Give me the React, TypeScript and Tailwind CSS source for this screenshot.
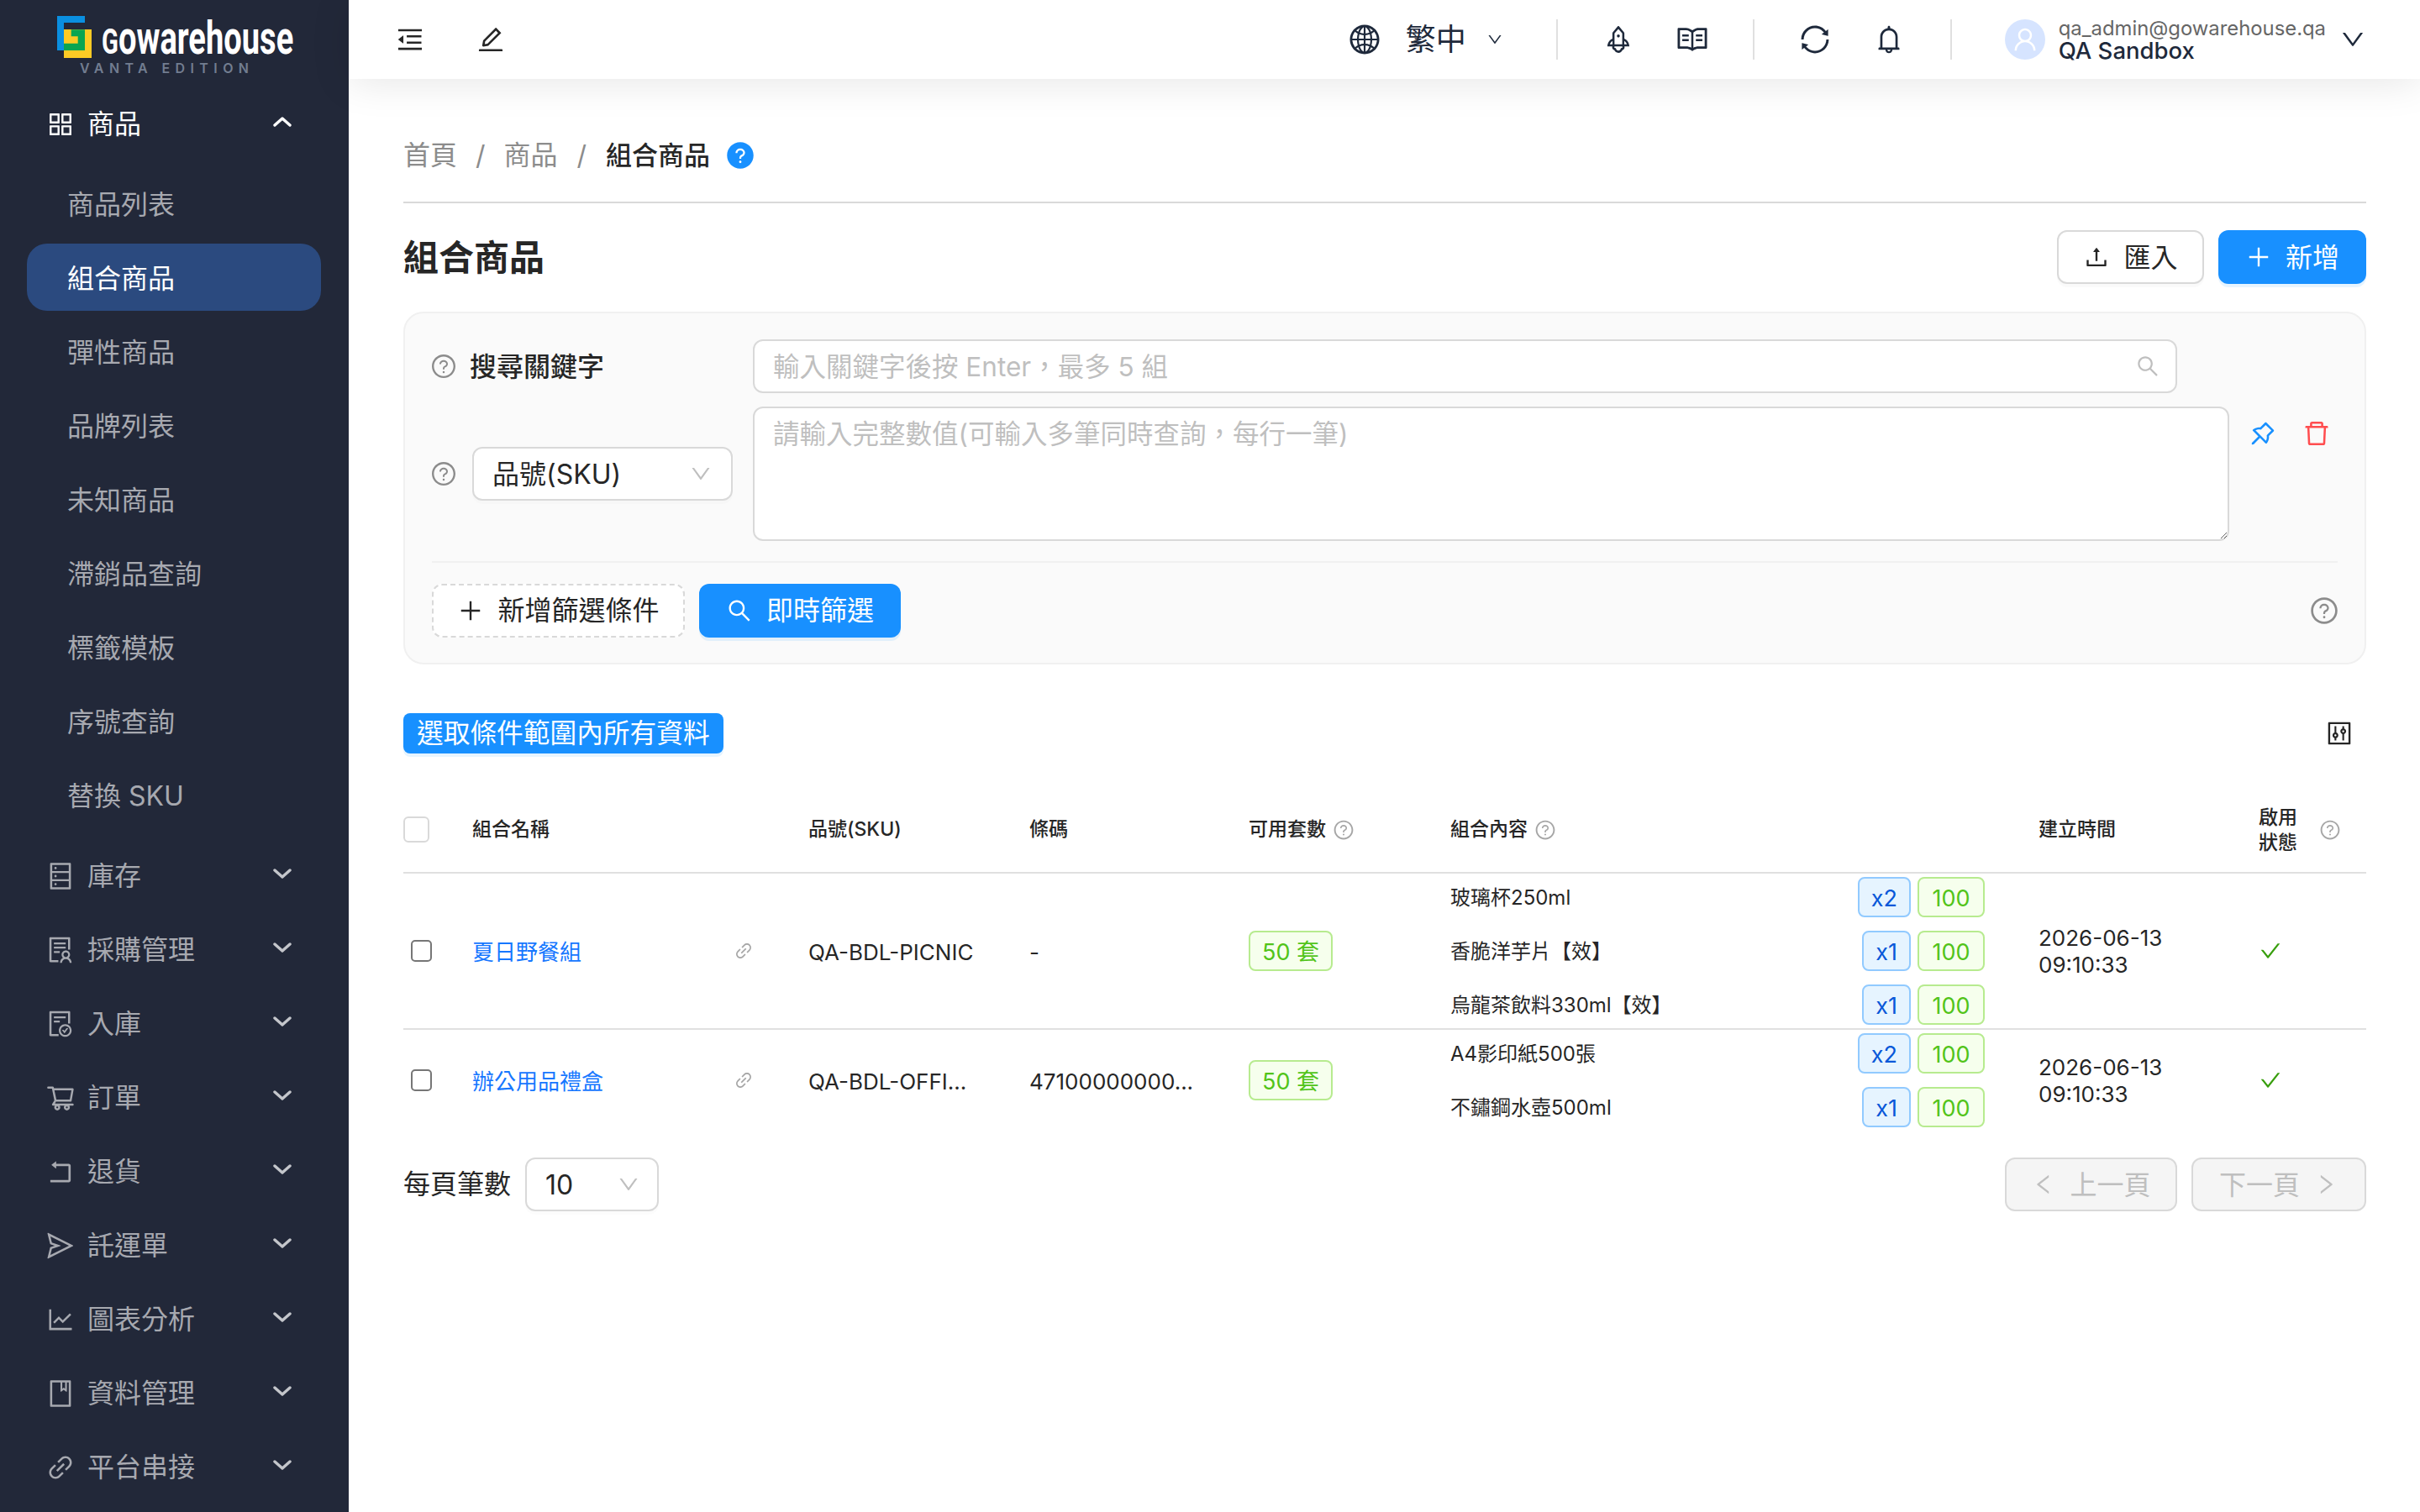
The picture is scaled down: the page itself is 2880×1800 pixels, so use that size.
import { ReactNode } from "react";
import {
  AiFillQuestionCircle,
  AiOutlineAppstore,
  AiOutlineBell,
  AiOutlineBook,
  AiOutlineCheck,
  AiOutlineControl,
  AiOutlineDatabase,
  AiOutlineDelete,
  AiOutlineDown,
  AiOutlineEdit,
  AiOutlineFileDone,
  AiOutlineGlobal,
  AiOutlineLeft,
  AiOutlineLineChart,
  AiOutlineLink,
  AiOutlineMenuFold,
  AiOutlinePlus,
  AiOutlinePushpin,
  AiOutlineQuestionCircle,
  AiOutlineRead,
  AiOutlineRight,
  AiOutlineRocket,
  AiOutlineRollback,
  AiOutlineSearch,
  AiOutlineSend,
  AiOutlineShoppingCart,
  AiOutlineSolution,
  AiOutlineSync,
  AiOutlineUpload,
  AiOutlineUser,
} from "react-icons/ai";

const subMenu = ["商品列表", "組合商品", "彈性商品", "品牌列表", "未知商品", "滯銷品查詢", "標籤模板", "序號查詢", "替換 SKU"];

const topMenu = [
  { label: "庫存", icon: <AiOutlineDatabase size={36} /> },
  { label: "採購管理", icon: <AiOutlineSolution size={36} /> },
  { label: "入庫", icon: <AiOutlineFileDone size={36} /> },
  { label: "訂單", icon: <AiOutlineShoppingCart size={36} /> },
  { label: "退貨", icon: <AiOutlineRollback size={36} /> },
  { label: "託運單", icon: <AiOutlineSend size={36} /> },
  { label: "圖表分析", icon: <AiOutlineLineChart size={36} /> },
  { label: "資料管理", icon: <AiOutlineBook size={36} /> },
  { label: "平台串接", icon: <AiOutlineLink size={36} /> },
];

const rows = [
  {
    name: "夏日野餐組",
    sku: "QA-BDL-PICNIC",
    barcode: "-",
    items: [
      { name: "玻璃杯250ml", qty: "x2" },
      { name: "香脆洋芋片【效】", qty: "x1" },
      { name: "烏龍茶飲料330ml【效】", qty: "x1" },
    ],
  },
  {
    name: "辦公用品禮盒",
    sku: "QA-BDL-OFFI...",
    barcode: "47100000000...",
    items: [
      { name: "A4影印紙500張", qty: "x2" },
      { name: "不鏽鋼水壺500ml", qty: "x1" },
    ],
  },
];

const Chevron = ({ up, white }: { up?: boolean; white?: boolean }) => (
  <svg width="22" height="14" viewBox="0 0 22 14" className={`ml-auto mr-[68px] mb-[6px] ${white ? "text-white" : "text-[#c4c6cb]"}`}>
    <polyline
      points={up ? "2,11 11,3 20,11" : "2,3 11,11 20,3"}
      fill="none"
      stroke="currentColor"
      strokeWidth="3.4"
      strokeLinecap="round"
      strokeLinejoin="round"
    />
  </svg>
);

const Logo = () => (
  <div className="h-[107px] relative shrink-0">
    <svg width="41" height="50" viewBox="0 0 41 50" className="absolute left-[68px] top-[19px]">
      <path d="M0 0H33V8H8V41H0Z" fill="#0a8fe0" />
      <rect x="8" y="16" width="33" height="34" fill="#fdcb25" />
      <path d="M16.7 16.3H33V41H8V32.7H24.7V24.3H16.7Z" fill="#0aa551" />
    </svg>
    <div className="absolute left-[121px] top-[19px] text-white font-bold [font-family:Roboto,sans-serif] text-[56px] leading-[52px] whitespace-nowrap origin-left scale-x-[0.68]">
      <span className="text-[43px]">G</span>owarehouse
    </div>
    <div className="absolute left-[95px] top-[72px] text-[#727d90] font-semibold text-[16px] leading-[18px] tracking-[6.4px] whitespace-nowrap">
      VANTA EDITION
    </div>
  </div>
);

const Sidebar = () => (
  <aside className="w-[415px] h-screen shrink-0 bg-[#222839] overflow-hidden flex flex-col">
    <Logo />
    <div className="h-[80px] flex items-center text-white text-[32px] pl-[54px] pt-[2px]">
      <span className="w-[50px] shrink-0"><AiOutlineAppstore size={36} /></span>
      商品
      <Chevron up white />
    </div>
    <div className="mt-[15px] flex flex-col gap-[8px]">
      {subMenu.map((item) => (
        <div
          key={item}
          className={`h-[80px] ml-[32px] mr-[33px] rounded-[24px] pl-[48px] pt-[3px] flex items-center text-[32px] ${item === "組合商品" ? "bg-[#2b4a7f] text-white" : "text-[#a7a9b0]"}`}
        >
          {item}
        </div>
      ))}
    </div>
    <div className="mt-[16px] flex flex-col gap-[8px]">
      {topMenu.map((item) => (
        <div key={item.label} className="h-[80px] flex items-center text-[#a7a9b0] text-[32px] pl-[54px] pt-[2px]">
          <span className="w-[50px] shrink-0">{item.icon}</span>
          {item.label}
          <Chevron />
        </div>
      ))}
    </div>
  </aside>
);

const NavDivider = () => <div className="w-[2px] h-[48px] bg-[#e0e0e0]" />;

const NavIcon = ({ children }: { children: ReactNode }) => (
  <div className="w-[48px] h-[48px] flex items-center justify-center text-[#1e293b]">{children}</div>
);

const Header = () => (
  <header className="h-[94px] shrink-0 bg-white relative z-10 shadow-[0_4px_48px_rgba(0,0,0,0.1)] flex items-center pl-[55px] pr-[64px]">
    <AiOutlineMenuFold size={36} className="text-[#262626]" />
    <AiOutlineEdit size={36} className="text-[#262626] ml-[60px]" />
    <div className="ml-auto flex items-center">
      <AiOutlineGlobal size={40} className="text-[#1e293b]" />
      <span className="ml-[29px] text-[36px] text-[#1e293b]">繁中</span>
      <AiOutlineDown size={20} className="ml-[24px] text-[#1e293b]" />
      <div className="ml-[63px]"><NavDivider /></div>
      <div className="ml-[48px]"><NavIcon><AiOutlineRocket size={38} /></NavIcon></div>
      <div className="ml-[40px]"><NavIcon><AiOutlineRead size={40} /></NavIcon></div>
      <div className="ml-[48px]"><NavDivider /></div>
      <div className="ml-[48px]"><NavIcon><AiOutlineSync size={40} /></NavIcon></div>
      <div className="ml-[40px]"><NavIcon><AiOutlineBell size={38} /></NavIcon></div>
      <div className="ml-[49px]"><NavDivider /></div>
      <div className="ml-[63px] w-[48px] h-[48px] rounded-full bg-[#d6e4ff] flex items-center justify-center text-white">
        <AiOutlineUser size={34} />
      </div>
      <div className="ml-[16px] flex flex-col">
        <span className="text-[23.85px] leading-[26px] text-[#666666]">qa_admin@gowarehouse.qa</span>
        <span className="text-[27.5px] leading-[26px] font-medium text-[#1e293b]">QA Sandbox</span>
      </div>
      <AiOutlineDown size={32} className="ml-[16px] text-[#1e293b]" />
    </div>
  </header>
);

const Help = ({ size = 32, color = "text-[#8c8c8c]" }: { size?: number; color?: string }) => (
  <AiOutlineQuestionCircle size={size} className={`shrink-0 ${color}`} />
);

const SelectBox = ({ value, width, arrowGap }: { value: string; width: string; arrowGap: string }) => (
  <div className={`${width} h-[64px] shrink-0 bg-white border-2 border-[#d9d9d9] rounded-[12px] flex items-center pl-[22px] ${arrowGap} text-[32px] text-[#262626] shadow-[0_4px_0_rgba(0,0,0,0.01)]`}>
    <span className="pt-[2px]">{value}</span>
    <AiOutlineDown size={28} className="ml-auto text-[#bfbfbf]" />
  </div>
);

const FilterPanel = () => (
  <div className="mt-[33px] bg-[#fafafa] border-2 border-[#f0f0f0] rounded-[24px] pt-[31px] pb-[30px] px-[32px]">
    <div className="flex items-center">
      <div className="w-[382px] -ml-[2px] flex items-center gap-[15px] shrink-0">
        <Help size={32} />
        <span className="pt-[2px] text-[32px] font-medium text-[#262626]">搜尋關鍵字</span>
      </div>
      <div className="relative w-[1695px] ml-[2px]">
        <input
          placeholder="輸入關鍵字後按 Enter，最多 5 組"
          className="w-full h-[64px] bg-white border-2 border-[#d9d9d9] rounded-[12px] pl-[22px] pr-[60px] text-[31.5px] outline-none placeholder:text-[#bfbfbf]"
        />
        <AiOutlineSearch size={30} className="absolute right-[20px] top-[17px] text-[#bfbfbf]" />
      </div>
    </div>
    <div className="mt-[16px] flex">
      <div className="w-[382px] -ml-[2px] flex items-center gap-[18px] shrink-0">
        <Help size={32} />
        <SelectBox value="品號(SKU)" width="w-[310px]" arrowGap="pr-[22px]" />
      </div>
      <textarea
        placeholder="請輸入完整數值(可輸入多筆同時查詢，每行一筆)"
        className="w-[1757px] h-[160px] ml-[2px] bg-white border-2 border-[#d9d9d9] rounded-[12px] px-[22px] py-[8px] text-[31.5px] leading-[46px] outline-none placeholder:text-[#bfbfbf]"
      />
      <div className="h-[64px] flex items-center pl-[22px] gap-[28px]">
        <AiOutlinePushpin size={36} className="text-[#1890ff]" />
        <AiOutlineDelete size={36} className="text-[#ff4d4f]" />
      </div>
    </div>
    <div className="mt-[24px] h-[2px] bg-[#f0f0f0]" />
    <div className="mt-[25px] flex items-center">
      <button className="w-[301px] h-[64px] bg-white border-2 border-dashed border-[#d9d9d9] rounded-[12px] flex items-center justify-center gap-[16px] text-[32px] text-[#262626]">
        <AiOutlinePlus size={32} />
        新增篩選條件
      </button>
      <button className="ml-[17px] w-[240px] h-[64px] bg-[#1890ff] rounded-[12px] flex items-center justify-center gap-[16px] text-[32px] text-white shadow-[0_4px_0_rgba(5,145,255,0.1)]">
        <AiOutlineSearch size={32} />
        即時篩選
      </button>
      <div className="ml-auto -mr-[2px]"><Help size={36} /></div>
    </div>
  </div>
);

const Tag = ({ kind, children }: { kind: "blue" | "green"; children: ReactNode }) => (
  <span className={`h-[48px] px-[14px] pt-[2px] rounded-[8px] border-2 flex items-center justify-center text-[27px] leading-none ${kind === "blue" ? "bg-[#e6f4ff] border-[#91caff] text-[#0958d9]" : "min-w-[80px] bg-[#f6ffed] border-[#b7eb8f] text-[#52c41a]"}`}>
    {children}
  </span>
);

const Table = () => (
  <div className="mt-[40px] text-[26px] text-[#262626]">
    <div className="grid grid-cols-[82px_400px_263px_261px_240px_700px_262px_128px] h-[103px] items-center border-b-2 border-[#e0e0e0] text-[23px] font-medium">
      <div className="w-[31px] h-[31px] bg-white border-2 border-[#d9d9d9] rounded-[6px]" />
      <div>組合名稱</div>
      <div>品號(SKU)</div>
      <div>條碼</div>
      <div className="flex items-center gap-[8px]">可用套數 <Help size={26} color="text-[#a6a6a6]" /></div>
      <div className="flex items-center gap-[8px]">組合內容 <Help size={26} color="text-[#a6a6a6]" /></div>
      <div>建立時間</div>
      <div className="flex items-center gap-[12px]">
        <span className="w-[60px] leading-[30px]">啟用狀態</span>
        <Help size={26} color="text-[#a6a6a6]" />
      </div>
    </div>
    {rows.map((row, index) => (
      <div
        key={row.name}
        className={`grid grid-cols-[82px_400px_263px_261px_240px_700px_262px_128px] items-center ${index === 0 ? "border-b-2 border-[#e0e0e0]" : ""}`}
      >
        <div className="pl-[9px]">
          <div className="w-[25px] h-[26px] bg-white border-2 border-[#767676] rounded-[5px]" />
        </div>
        <div className="flex items-center pr-[65px]">
          <span className="pt-[2px] text-[#1677ff]">{row.name}</span>
          <AiOutlineLink size={24} className="ml-auto text-[#a6a6a6]" />
        </div>
        <div className="pt-[2px]">{row.sku}</div>
        <div className="pt-[2px]">{row.barcode}</div>
        <div className="flex">
          <Tag kind="green">50 套</Tag>
        </div>
        <div className="flex flex-col gap-[16px] py-[4px] pr-[64px]">
          {row.items.map((item) => (
            <div key={item.name} className="flex items-center h-[48px] text-[24px]">
              <span className="pt-[2px]">{item.name}</span>
              <div className="ml-auto flex gap-[8px]">
                <Tag kind="blue">{item.qty}</Tag>
                <Tag kind="green">100</Tag>
              </div>
            </div>
          ))}
        </div>
        <div className="pt-[2px] leading-[32px]">
          2026-06-13
          <br />
          09:10:33
        </div>
        <div>
          <AiOutlineCheck size={28} className="text-[#389e0d]" />
        </div>
      </div>
    ))}
  </div>
);

const Pagination = () => (
  <div className="mt-[32px] flex items-center">
    <span className="text-[32px] text-[#262626]">每頁筆數</span>
    <div className="ml-[17px]">
      <SelectBox value="10" width="w-[159px]" arrowGap="pr-[20px]" />
    </div>
    <button className="ml-auto w-[205px] h-[64px] bg-[#f5f5f5] border-2 border-[#d9d9d9] rounded-[12px] flex items-center justify-center gap-[16px] text-[32px] text-[#bfbfbf]">
      <AiOutlineLeft size={30} />
      <span className="pt-[2px]">上一頁</span>
    </button>
    <button className="ml-[17px] w-[208px] h-[64px] bg-[#f5f5f5] border-2 border-[#d9d9d9] rounded-[12px] flex items-center justify-center gap-[16px] text-[32px] text-[#bfbfbf]">
      <span className="pt-[2px]">下一頁</span>
      <AiOutlineRight size={30} />
    </button>
  </div>
);

const App = () => {
  return (
    <div className="flex w-screen h-screen overflow-hidden bg-white [font-family:Inter,'Noto_Sans_CJK_TC',sans-serif]">
      <Sidebar />
      <div className="flex-1 min-w-0 flex flex-col">
        <Header />
        <main className="flex-1 pl-[65px] pr-[64px]">
          <div className="mt-[66px] h-[50px] flex items-center text-[32px] text-[#8c8c8c]">
            <span>首頁</span>
            <span className="mx-[22px]">/</span>
            <span>商品</span>
            <span className="mx-[23px]">/</span>
            <span className="text-[31px] font-medium text-[#262626]">組合商品</span>
            <AiFillQuestionCircle size={36} className="ml-[18px] text-[#1890ff]" />
          </div>
          <div className="mt-[30px] h-[2px] bg-[#d9d9d9]" />
          <div className="mt-[32px] flex items-center">
            <h1 className="text-[42px] font-bold text-[#262626]">組合商品</h1>
            <button className="ml-auto w-[175px] h-[64px] bg-white border-2 border-[#d9d9d9] rounded-[12px] flex items-center justify-center gap-[16px] text-[32px] text-[#262626] shadow-[0_4px_0_rgba(0,0,0,0.02)]">
              <AiOutlineUpload size={32} />
              <span className="pt-[2px]">匯入</span>
            </button>
            <button className="ml-[17px] w-[176px] h-[64px] bg-[#1890ff] rounded-[12px] flex items-center justify-center gap-[16px] text-[32px] text-white shadow-[0_4px_0_rgba(5,145,255,0.1)]">
              <AiOutlinePlus size={32} />
              <span className="pt-[2px]">新增</span>
            </button>
          </div>
          <FilterPanel />
          <div className="mt-[58px] flex items-center justify-between">
            <span className="h-[48px] rounded-[8px] bg-[#1890ff] px-[16px] flex items-center text-[31.7px] text-white shadow-[0_4px_0_rgba(5,145,255,0.1)]">
              選取條件範圍內所有資料
            </span>
            <AiOutlineControl size={34} className="mr-[15px] text-[#262626]" />
          </div>
          <Table />
          <Pagination />
        </main>
      </div>
    </div>
  );
};

export default App;
